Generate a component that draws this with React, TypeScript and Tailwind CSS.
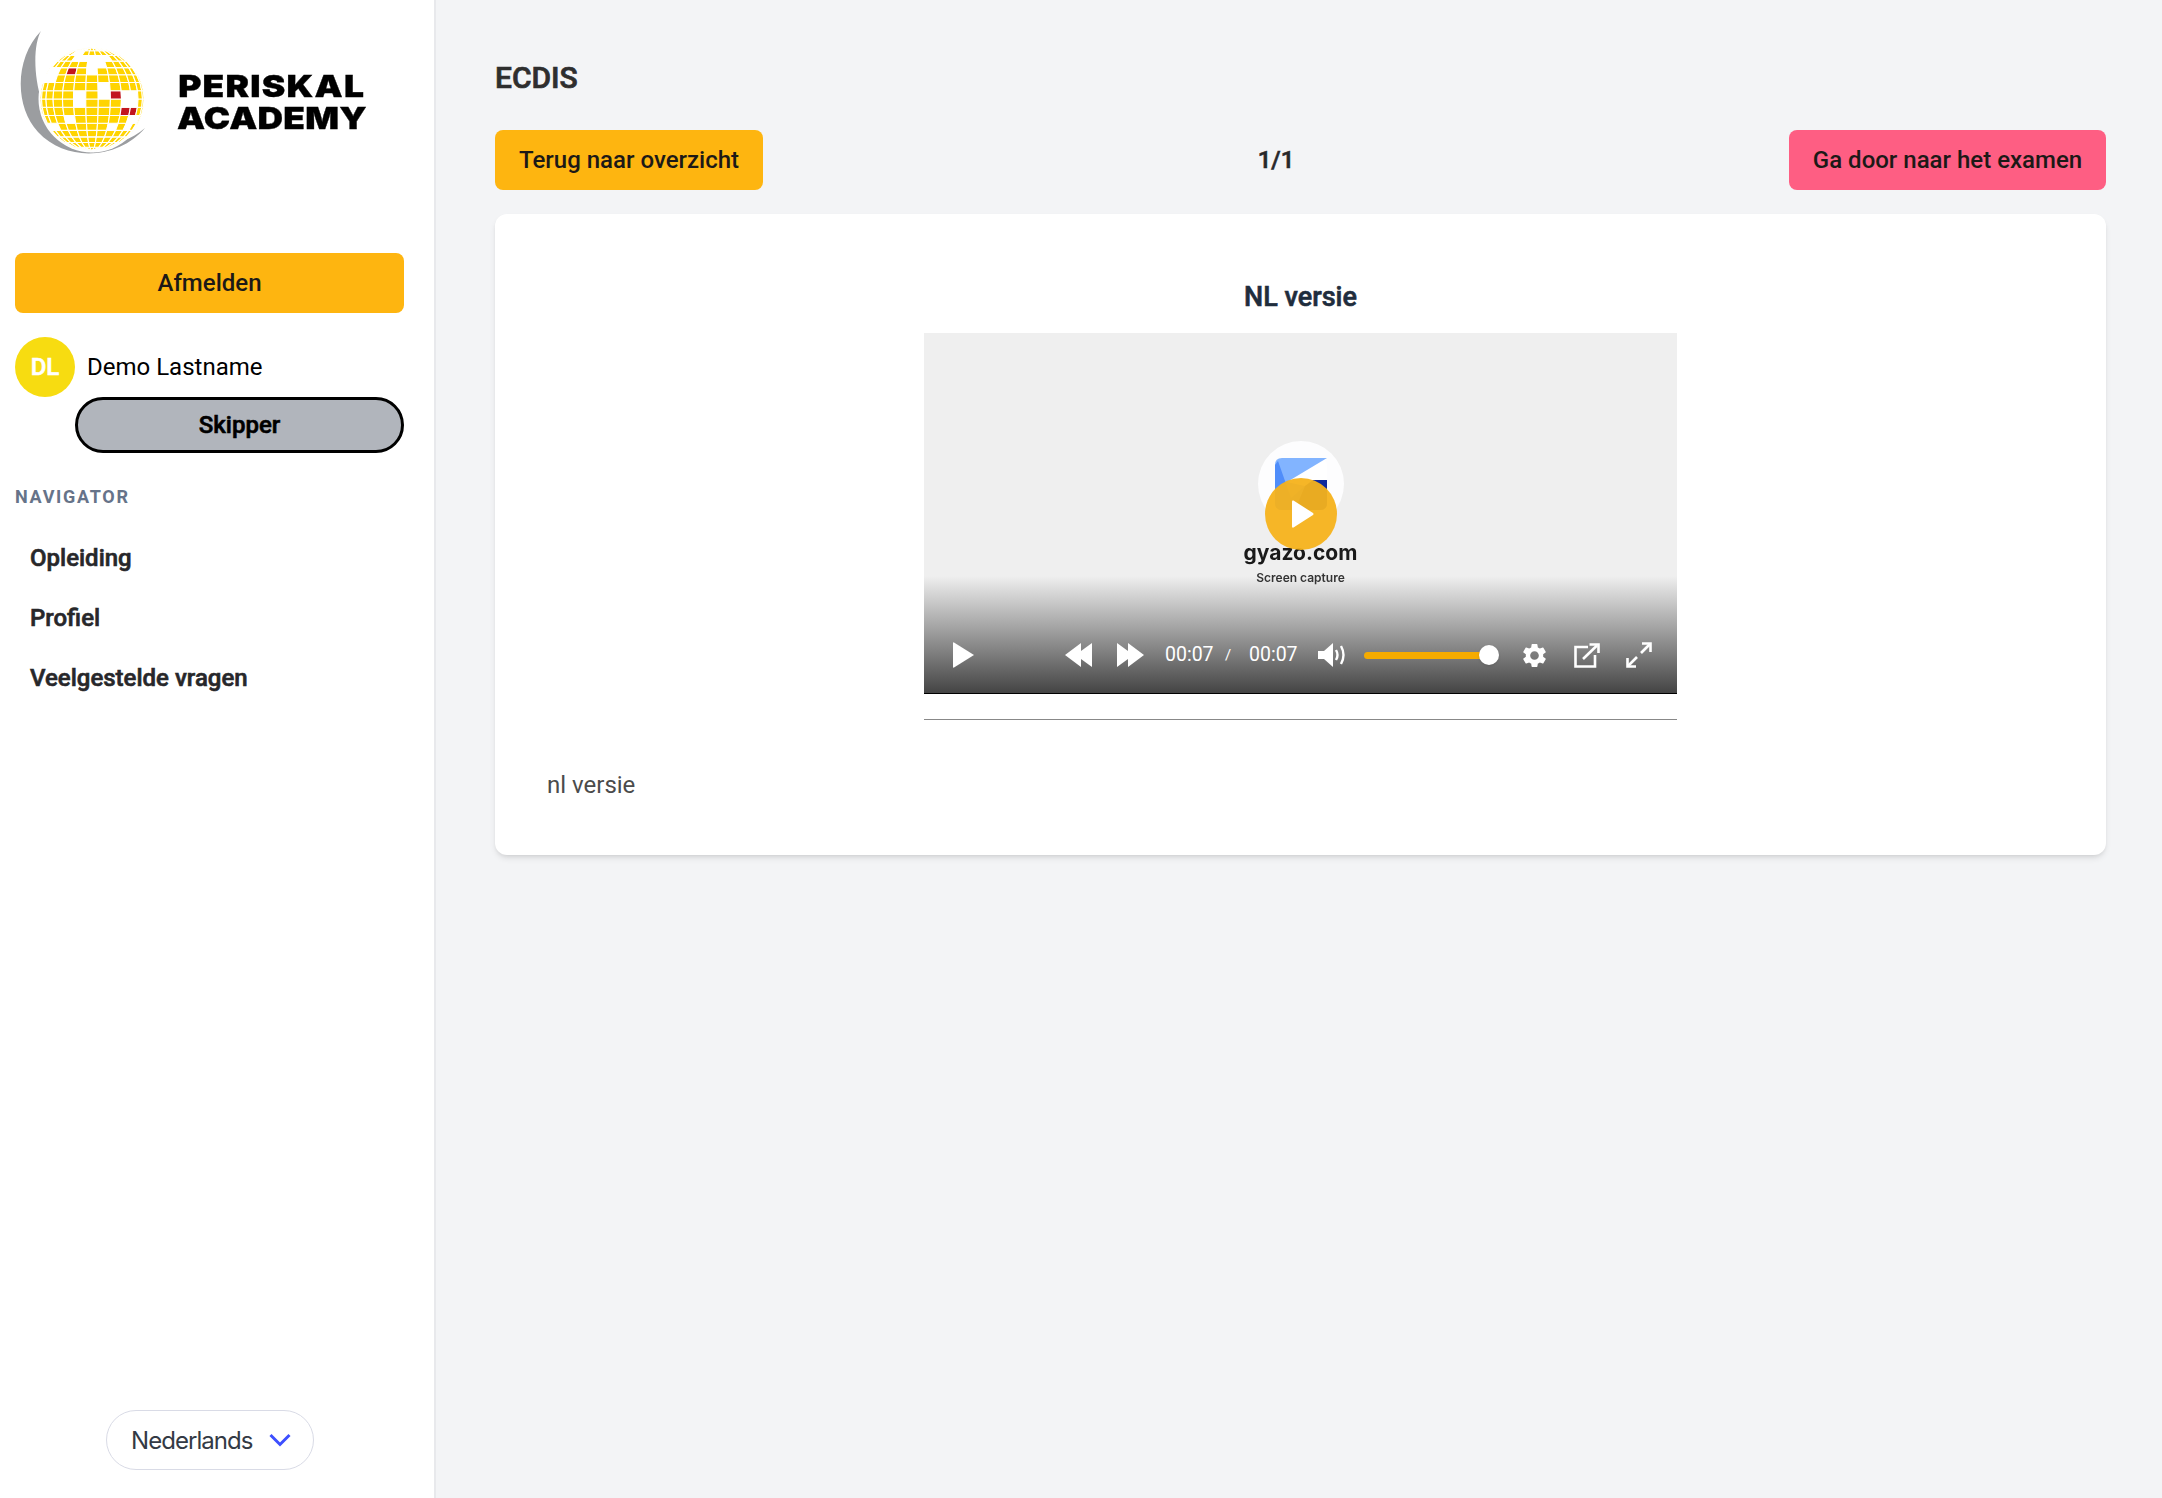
import React from "react";
import { MdSettings } from "react-icons/md";

function Globe() {
  const cx = 92, cy = 99, R = 52;
  const rows = 16, cols = 13;
  const white = [[276,176],[312,152],[232,252],[322,228],[322,252],[204,326],[148,204],[392,278],[380,352],[240,140],[170,352],[276,152],[345,352],[392,255],[166,180],[400,322],[226,278]];
  const red = [[210,178],[358,252],[388,300]];
  const cells: React.ReactNode[] = [];
  const rad = Math.PI / 180;
  const pt = (lat: number, lon: number) => {
    const v = 0.5 * Math.sin(lat * rad) + 0.5 * (lat / 90);
    return [
      cx + R * Math.sqrt(Math.max(0, 1 - v * v)) * Math.sin(lon * rad),
      cy - R * v,
    ];
  };
  const near = (l: number[][], x: number, y: number) =>
    l.some(([a, b]) => Math.abs(a / 3 - x) < 5.5 && Math.abs(10 + b / 3 - y) < 4.2);
  for (let r = 0; r < rows; r++) {
    for (let c = 0; c < cols; c++) {
      const la0 = -90 + (r * 180) / rows, la1 = la0 + 180 / rows;
      const lo0 = -90 + (c * 180) / cols, lo1 = lo0 + 180 / cols;
      const p = [pt(la0, lo0), pt(la0, lo1), pt(la1, lo1), pt(la1, lo0)];
      const mx = (p[0][0] + p[1][0] + p[2][0] + p[3][0]) / 4;
      const my = (p[0][1] + p[1][1] + p[2][1] + p[3][1]) / 4;
      const isRed = near(red, mx, my);
      const isWhite = !isRed && near(white, mx, my);
      cells.push(
        <polygon
          key={`${r}-${c}`}
          points={p.map((q) => q.join(",")).join(" ")}
          fill={isRed ? "#c2161e" : isWhite ? "#ffffff" : "#ffd400"}
          stroke="#ffffff"
          strokeWidth="1.1"
        />
      );
    }
  }
  return (
    <svg width="160" height="170" viewBox="15 16 160 170" className="shrink-0">
      <path d="M41 31 C30 50 34 110 62 134 C85 152 122 148 145 128 C120 158 68 164 38 132 C14 106 15 58 41 31 Z" fill="#9b9da0" />
      <circle cx={cx} cy={cy} r={R + 1.5} fill="#ffffff" />
      {cells}
    </svg>
  );
}

function GyazoThumb() {
  return (
    <div className="absolute inset-0 flex flex-col items-center blur-[0.6px]">
      <div className="mt-[108px] w-[86px] h-[86px] rounded-full bg-[#fdfdfe] flex items-center justify-center">
        <svg width="52" height="52" viewBox="0 0 52 52">
          <rect x="0" y="0" width="52" height="52" rx="7" fill="#ffffff" />
          <path d="M7 0 H52 L12 24 L30 28 L52 23 V45 Q52 52 45 52 H7 Q0 52 0 45 V7 Q0 0 7 0 Z" fill="#82b4ff" />
          <path d="M0 7 L3 3 L16 40 L30 28 L52 23 V45 Q52 52 45 52 H7 Q0 52 0 45 Z" fill="#4f8dfa" />
          <path d="M38 22 H52 V45 Q52 52 45 52 H20 L30 28 Z" fill="#0f2a9c" />
        </svg>
      </div>
      <div className="mt-[12px] text-[21px] leading-[28px] font-bold text-[#1a1a1a] font-['Inter']">gyazo.com</div>
      <div className="mt-[3px] text-[12px] leading-[16px] font-semibold text-[#333] font-['Inter']">Screen capture</div>
    </div>
  );
}

function Controls() {
  return (
    <div className="absolute left-0 right-0 bottom-0 h-[117px] bg-gradient-to-b from-[#44444400] to-[#444444] flex items-end">
      <div className="flex items-center h-[26px] mb-[25px] w-full text-white">
        <svg width="21" height="26" viewBox="0 0 21 26" className="ml-[29px]"><path d="M1 0.5 L21 13 L1 25.5 Q0 26 0 25 V1 Q0 0 1 .5 Z" fill="#fff" /></svg>
        <svg width="27" height="24" viewBox="0 0 27 24" className="ml-[91px]"><path d="M16 0 V8 L27 0 V24 L16 16 V24 L0 12 Z" fill="#fff" /></svg>
        <svg width="27" height="24" viewBox="0 0 27 24" className="ml-[25px]"><path d="M11 0 V8 L0 0 V24 L11 16 V24 L27 12 Z" fill="#fff" /></svg>
        <span className="ml-[21px] text-[19.5px] leading-none w-[47px]">00:07</span>
        <span className="ml-[11px] w-[10px] text-[15px] leading-none text-center">/</span>
        <span className="ml-[16px] text-[19.5px] leading-none w-[48px]">00:07</span>
        <svg width="28" height="24" viewBox="0 0 28 24" className="ml-[21px]">
          <path d="M0 8 H6 L15 0 V24 L6 16 H0 Z" fill="#fff" />
          <path d="M18 7 Q21 12 18 17 M23 3 Q28 12 23 21" stroke="#fff" strokeWidth="2.4" fill="none" />
        </svg>
        <div className="ml-[18px] relative w-[125px] h-[7px] rounded-full bg-[#f5ab00]">
          <div className="absolute right-[-10px] top-[-7px] w-[20px] h-[20px] rounded-full bg-white shadow" />
        </div>
        <MdSettings size={29} className="ml-[31px] text-white" />
        <svg width="26" height="25" viewBox="0 0 26 25" className="ml-[25px]" fill="none" stroke="#fff" strokeWidth="2.6">
          <path d="M14 4 H1.5 V23.5 H21 V12" />
          <path d="M9 16 L23 2.5" />
          <path d="M15.5 1.5 H24.5 V10" />
        </svg>
        <svg width="26" height="26" viewBox="0 0 26 26" className="ml-[26px]" fill="none" stroke="#fff" strokeWidth="2.6">
          <path d="M15 11 L24 2" />
          <path d="M16 1.5 H24.5 V10" />
          <path d="M11 15 L2 24" />
          <path d="M10 24.5 H1.5 V16" />
        </svg>
      </div>
    </div>
  );
}

export default function App() {
  return (
    <div className="flex h-[1498px] bg-[#f3f4f6] font-['Roboto',sans-serif]">
      <aside className="w-[436px] shrink-0 bg-white border-r-2 border-[#e8e9ec] flex flex-col pl-[15px] pr-[30px]">
        <div className="h-[253px] flex items-start pt-[16px]">
          <Globe />
          <div className="ml-[2px] mt-[54px] font-['Inter'] font-black text-[30px] leading-[32px] text-black origin-left scale-x-[1.18] whitespace-nowrap [-webkit-text-stroke:0.3px_#000]">
            <div className="pl-[1px] tracking-[1px]">PERISKAL</div>
            <div className="tracking-[0.2px]">ACADEMY</div>
          </div>
        </div>
        <button className="h-[60px] rounded-[8px] bg-[#feb510] text-[24px] font-medium text-[#1c1917]">Afmelden</button>
        <div className="mt-[24px] flex items-center h-[60px]">
          <div className="w-[60px] h-[60px] rounded-full bg-[#f7dc11] flex items-center justify-center text-white font-medium text-[24px] [-webkit-text-stroke:0.6px_#fff]">DL</div>
          <span className="ml-[12px] text-[24px] text-black">Demo Lastname</span>
        </div>
        <div className="ml-[60px] h-[56px] rounded-full border-[3px] border-black bg-[#b1b5bc] flex items-center justify-center text-[24px] font-medium text-black [-webkit-text-stroke:0.6px_#000]">Skipper</div>
        <div className="mt-[33px] text-[18px] leading-[22px] font-bold tracking-[1.7px] text-[#667389]">NAVIGATOR</div>
        <nav className="mt-[32px] pl-[15px] flex flex-col gap-[24px] text-[24px] leading-[36px] font-medium text-[#27272a] [-webkit-text-stroke:0.6px_#27272a]">
          <a>Opleiding</a>
          <a>Profiel</a>
          <a>Veelgestelde vragen</a>
        </nav>
        <div className="mt-auto mb-[28px] ml-[91px] w-[208px] h-[60px] rounded-full border border-[#d9dbe6] flex items-center pl-[24px] gap-[16px]">
          <span className="pt-[1px] text-[24px] text-[#333a45] font-['Inter'] tracking-[-0.95px]">Nederlands</span>
          <svg width="22" height="14" viewBox="0 0 22 14" fill="none" stroke="#3d4fff" strokeWidth="3"><path d="M1.5 2 L11 11.5 L20.5 2" /></svg>
        </div>
      </aside>
      <main className="flex-1 pt-[60px] pl-[59px] pr-[56px]">
        <h1 className="text-[30px] leading-[36px] font-medium text-[#2e2e2e] [-webkit-text-stroke:0.7px_#2e2e2e]">ECDIS</h1>
        <div className="mt-[34px] flex items-center justify-between">
          <button className="h-[60px] w-[268px] rounded-[8px] bg-[#feb510] text-[24px] font-medium text-[#1c1917]">Terug naar overzicht</button>
          <span className="text-[24px] font-medium text-[#27272a] [-webkit-text-stroke:0.6px_#27272a]">1/1</span>
          <button className="h-[60px] w-[317px] rounded-[8px] bg-[#fe5e83] text-[24px] font-medium text-[#1c1917]">Ga door naar het examen</button>
        </div>
        <section className="mt-[24px] bg-white rounded-[12px] shadow-md pt-[65px] pb-[52px] px-[52px]">
          <h2 className="text-center text-[27px] leading-[36px] font-medium text-[#1f2d3d] [-webkit-text-stroke:0.6px_#1f2d3d]">NL versie</h2>
          <div className="mt-[18px] mx-auto w-[753px]">
            <div className="relative h-[361px] bg-[#efefef] border-b border-black overflow-hidden">
              <GyazoThumb />
              <Controls />
              <div className="absolute left-[341px] top-[145px] w-[72px] h-[72px] rounded-full bg-[#f5b21b]/95 flex items-center justify-center">
                <svg width="22" height="28" viewBox="0 0 22 28" className="ml-[3px]"><path d="M1.5 0.5 L21 13 Q22 14 21 15 L1.5 27.5 Q0 28 0 26.5 V1.5 Q0 0 1.5 .5 Z" fill="#fff" /></svg>
              </div>
            </div>
            <div className="mt-[25px] h-[1px] bg-[#888888]" />
          </div>
          <p className="mt-[47px] text-[24px] leading-[36px] text-[#4b4b4b]">nl versie</p>
        </section>
      </main>
    </div>
  );
}
